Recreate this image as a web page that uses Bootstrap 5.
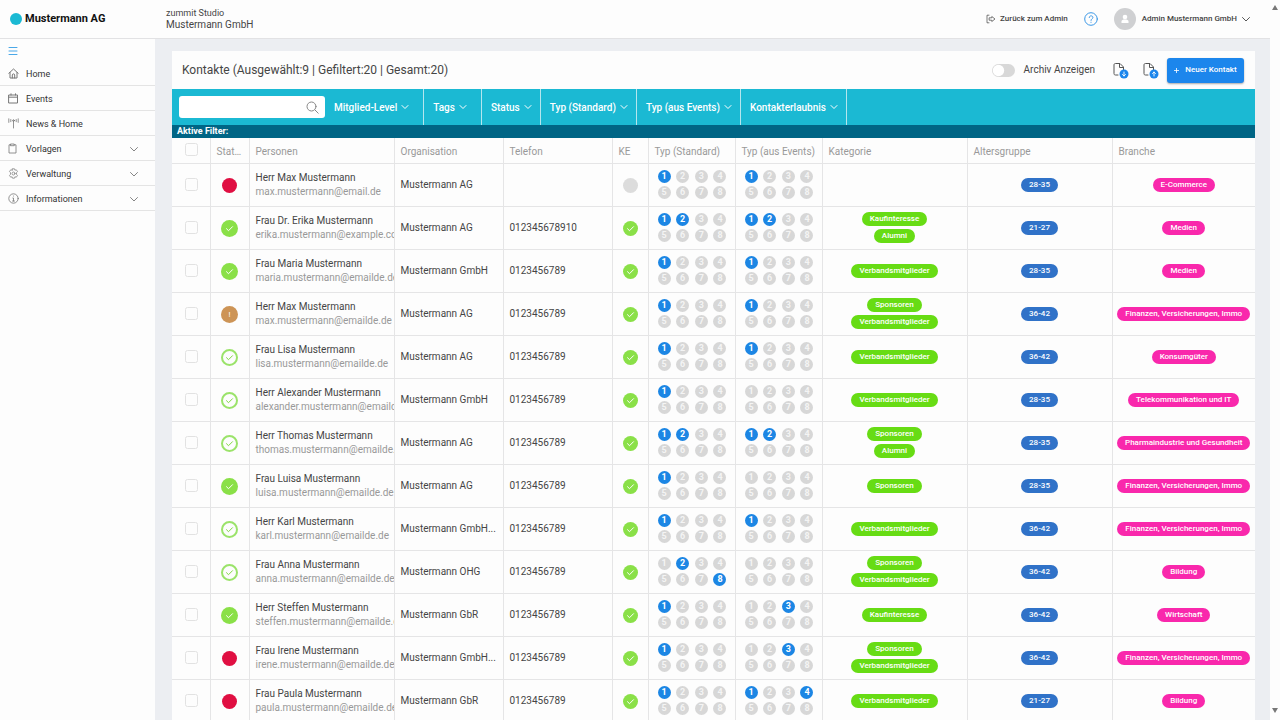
<!DOCTYPE html>
<html lang="de">
<head>
<meta charset="utf-8">
<meta name="viewport" content="width=device-width, initial-scale=1">
<title>Kontakte – zummit Studio</title>
<link href="https://cdn.jsdelivr.net/npm/bootstrap@5.3.0/dist/css/bootstrap.min.css" rel="stylesheet">
<style>
  body { font-family: Roboto, "Liberation Sans", sans-serif; font-size: 10px; line-height: 14px; color: #454545; background: #fdfdfd; }
  button, input { font: inherit; color: inherit; }
  svg { display: block; flex: none; fill: none; stroke: currentColor; stroke-linecap: round; stroke-linejoin: round; }
  a { color: inherit; text-decoration: none; }
  .topbar { height: 39px; border-bottom: 1px solid #e2e2e4; padding-left: 10px; padding-right: 19px; }
  .brand { width: 156px; font-size: 11px; font-weight: 700; color: #111; gap: 3px; }
  .brand-dot { width: 12px; height: 12px; background: #1bb9d3; }
  .tenant { line-height: 12px; }
  .tenant small { font-size: 9px; }
  .top-text { font-size: 8px; font-weight: 500; color: #444; }
  .help { color: #3a97e6; }
  .avatar { width: 22px; height: 22px; margin-right: 6px; background: #cfd0d2; color: #fff; }
  .side { width: 155px; padding-top: 8px; }
  .side .burger { color: #4aa8e8; padding: 0 8px 6px; }
  .side a { height: 25px; padding: 1px 16px 0 8px; gap: 7px; font-size: 9px; color: #333; border-bottom: 1px solid #e4e4e4; }
  .side a svg { color: #777; }
  .canvas { background: #eceef2; padding: 12px 15px 0 17px; }
  .panel { background: #fdfdfd; }
  .panel-head { height: 38px; padding: 0 11px 0 10px; }
  .panel-head h1 { font-size: 12px; line-height: 16px; font-weight: 400; }
  .archive { gap: 9px; }
  .archive .form-check-input { --bs-form-switch-bg: url("data:image/svg+xml,%3csvg xmlns='http://www.w3.org/2000/svg' viewBox='-4 -4 8 8'%3e%3ccircle r='3.500' fill='%23fff'/%3e%3c/svg%3e") !important; background-image: var(--bs-form-switch-bg) !important; width: 23px; height: 13px; background-color: #d8d8d8; border: 0; }
  .panel-head .btn-file { color: #555; }
  .btn-new { width: 77px; height: 25px; background: #1c86ec; color: #fff; font-size: 8px; font-weight: 500; border-radius: 3px; box-shadow: 0 1px 2px #0005; gap: 6px; }
  .btn-new:hover { background: #1273d1; color: #fff; }
  .filters { height: 36px; background: #1bb9d3; padding-left: 7px; }
  .search { width: 146px; height: 22px; background: #fff; border-radius: 3px; color: #888; padding-right: 6px; }
  .search input { border: 0; outline: 0; background: none; padding: 0 6px; min-width: 0; }
  .filters .btn { color: #fff; font-size: 10px; font-weight: 500; border-radius: 0; border: 0; border-right: 1px solid #b5e6ee; padding: 0 8px 0 9px; gap: 4px; }
  .filters .btn.roomy { padding-right: 14px; }
  .active-filters { background: #006585; color: #fff; font-size: 9px; font-weight: 700; line-height: 13px; padding-left: 5px; }
  .contacts { table-layout: fixed; width: 100%; }
  .contacts th, .contacts td { border-bottom: 1px solid #e5e5e6; border-right: 1px solid #e5e5e6; padding: 0 0 0 6px; vertical-align: middle; overflow: hidden; white-space: nowrap; text-overflow: ellipsis; }
  .contacts th { height: 25px; padding-top: 3px; font-weight: 400; color: #999; }
  .contacts .tight { padding-right: 6px; }
  .contacts td { height: 43px; }
  .contacts th:last-child, .contacts td:last-child { border-right: 0; }
  .contacts .mid { padding: 0; text-align: center; }
  .contacts .pick { padding: 0 0 0 1px; text-align: center; }
  .contacts .person { text-overflow: clip; }
  .contacts input { margin: 0; width: 13px; height: 13px; border: 1px solid #e2e2e2; border-radius: 2px; box-shadow: none; background-color: #fdfdfd; }
  .mail { color: #999; }
  .dot { width: 15px; height: 15px; margin: 2px auto 0; }
  .dot-big { width: 17px; height: 17px; }
  .dot-red { background: #e00f42; }
  .dot-green { background: #8ae048; color: #fff; }
  .dot-ring { border: 2px solid #9be36a; color: #7fd840; }
  .dot-warn { background: #cd9456; color: #fff; font-size: 8px; }
  .dot-none { background: #dcdcdc; }
  .nums { display: grid; grid-template-columns: repeat(4, 13px); justify-content: space-between; width: 69px; margin-left: 3px; row-gap: 3px; }
  .nums span { height: 13px; border-radius: 50%; background: #d7d7d7; color: #f4f4f4; font-size: 9px; line-height: 13px; font-weight: 700; text-align: center; }
  .nums .on { background: #1c86e4; color: #fff; }
  .pills { gap: 3px; }
  .pill { height: 14px; line-height: 14px; padding: 0 8px; border-radius: 7px; font-size: 8px; font-weight: 500; color: #fff; }
  .pill-green { background: #67dc14; }
  .pill-blue { background: #3072c8; }
  .pill-pink { background: #f928ac; }
  .gutter { width: 10px; padding: 5px 0 7px; color: #777; }
  .gutter svg { fill: currentColor; stroke: none; }
</style>
</head>
<body>
<div class="vh-100 overflow-hidden d-flex">
  <div class="flex-grow-1 d-flex flex-column overflow-hidden">
    <header class="topbar d-flex align-items-center flex-shrink-0">
      <div class="brand d-flex align-items-center"><span class="brand-dot rounded-circle"></span>Mustermann AG</div>
      <div class="tenant d-flex flex-column"><small>zummit Studio</small><span>Mustermann GmbH</span></div>
      <a href="#" class="top-text d-flex align-items-center gap-1 ms-auto">
        <svg width="10" height="10" viewBox="0 0 10 10"><path d="M3 1.200H1v7.600h2M3.500 3.800h2.300V2.500L9 5 5.800 7.500V6.200H3.500z" stroke-width=".7"/></svg>
        Zurück zum Admin</a>
      <a href="#" class="help ms-3" aria-label="Hilfe">
        <svg width="14" height="14" viewBox="0 0 14 14"><circle cx="7" cy="7" r="6.300"/><path d="M5.200 5.500c0-2.300 3.700-2.200 3.700 0C8.900 6.800 7 6.800 7 8.400M7 10.200v.2"/></svg></a>
      <a href="#" class="top-text d-flex align-items-center ms-3">
        <span class="avatar rounded-circle d-flex align-items-center justify-content-center">
          <svg width="8" height="10" viewBox="0 0 8 10"><g fill="currentColor" stroke="none"><circle cx="4" cy="3" r="2.300"/><path d="M.5 9V7.500C.5 6 2 5.500 4 5.500s3.500.5 3.500 2V9z"/></g></svg></span>
        <span class="me-1">Admin Mustermann GmbH</span>
        <svg width="10" height="10" viewBox="0 0 10 10"><path d="M1.500 3.500 5 7l3.500-3.500" stroke-width=".9"/></svg></a>
    </header>
    <div class="flex-grow-1 d-flex overflow-hidden">
      <nav class="side flex-shrink-0">
        <button class="burger btn border-0 d-block" type="button" aria-label="Menü"><svg width="10" height="8" viewBox="0 0 10 8"><path d="M1 .5h8M1 4h8M1 7.500h8" stroke-width="1"/></svg></button>
        <a href="#" class="d-flex align-items-center"><svg width="11" height="11" viewBox="0 0 11 11"><path d="M.8 5.300 5.500 1l4.700 4.300M2 4.500V10h7V4.500M4.300 10V7c0-1.500 2.400-1.500 2.400 0v3"/></svg>Home</a>
        <a href="#" class="d-flex align-items-center"><svg width="11" height="11" viewBox="0 0 11 11"><path d="M1 2h8.500v8H1zM1 4.200h8.500M3 .8V2M7.500.8V2"/></svg>Events</a>
        <a href="#" class="d-flex align-items-center"><svg width="11" height="11" viewBox="0 0 11 11"><path d="M5.500 3.500V10M2.800 1.500v2.200M8.200 1.500v2.200M.8.800v3.600M10.200.8v3.600" stroke-width=".8"/><circle cx="5.500" cy="2.600" r=".8"/></svg>News &amp; Home</a>
        <a href="#" class="d-flex align-items-center"><svg width="11" height="11" viewBox="0 0 11 11"><path d="M2.800 1.800H1V10h7V1.800H6.200M2.800 1h3.400v1.700H2.800z" stroke-width=".8"/></svg>Vorlagen<svg class="ms-auto" width="10" height="10" viewBox="0 0 10 10"><path d="M1.500 3.500 5 7l3.500-3.500" stroke-width=".9"/></svg></a>
        <a href="#" class="d-flex align-items-center"><svg width="11" height="11" viewBox="0 0 11 11"><path d="m4.500.8h2l.4 1.400 1.400-.4 1.200 1.800-1 1.100v1.600l1 1.100-1.200 1.800-1.400-.4-.4 1.400h-2l-.4-1.400-1.400.4-1.200-1.800 1-1.100V4.700l-1-1.100 1.200-1.800 1.400.4z" stroke-width=".7"/><circle cx="5.500" cy="5.500" r="1.500" stroke-width=".7"/></svg>Verwaltung<svg class="ms-auto" width="10" height="10" viewBox="0 0 10 10"><path d="M1.500 3.500 5 7l3.500-3.500" stroke-width=".9"/></svg></a>
        <a href="#" class="d-flex align-items-center"><svg width="11" height="11" viewBox="0 0 11 11"><circle cx="5.500" cy="5.500" r="4.700" stroke-width=".8"/><path d="M5.500 3v.1M4.800 5h.7v3M4.500 8h2" stroke-width=".8"/></svg>Informationen<svg class="ms-auto" width="10" height="10" viewBox="0 0 10 10"><path d="M1.500 3.500 5 7l3.500-3.500" stroke-width=".9"/></svg></a>
      </nav>
      <main class="canvas flex-grow-1 overflow-hidden">
        <div class="panel">
          <div class="panel-head d-flex align-items-center">
            <h1 class="m-0 me-auto">Kontakte (Ausgewählt:9 | Gefiltert:20 | Gesamt:20)</h1>
            <div class="archive form-switch d-flex align-items-center p-0">
              <input class="form-check-input m-0" type="checkbox" role="switch" id="archiv"><label for="archiv">Archiv Anzeigen</label>
            </div>
            <button class="btn btn-file p-0 border-0 ms-3 me-2" type="button" aria-label="Exportieren"><svg width="18" height="18" viewBox="0 0 18 18"><path d="M7 14H4.500C3.500 14 3 13.500 3 12.500V4c0-1 .5-1.500 1.500-1.500H9L12.500 6v3M8.500 2.500V6.500h4"/><circle cx="13" cy="13" r="4.500" fill="#1c86ec" stroke="none"/><path d="M13 11v4m-1.500-1.500L13 15l1.500-1.500" stroke="#fff" stroke-width=".9"/></svg></button>
            <button class="btn btn-file p-0 border-0 ms-1 me-2" type="button" aria-label="Importieren"><svg width="18" height="18" viewBox="0 0 18 18"><path d="M7 14H4.500C3.500 14 3 13.500 3 12.500V4c0-1 .5-1.500 1.500-1.500H9L12.500 6v3M8.500 2.500V6.500h4"/><circle cx="13" cy="13" r="4.500" fill="#1c86ec" stroke="none"/><path d="M13 15v-4m-1.500 1.500L13 11l1.500 1.500" stroke="#fff" stroke-width=".9"/></svg></button>
            <button class="btn btn-new p-0 d-flex align-items-center justify-content-center" type="button"><svg width="5" height="5" viewBox="0 0 5 5"><path d="M2.500 0v5M0 2.500h5" stroke-width=".8"/></svg>Neuer Kontakt</button>
          </div>
          <div class="filters d-flex align-items-stretch">
            <div class="search d-flex align-items-center align-self-center"><input class="flex-grow-1" type="text" aria-label="Suche"><svg width="13" height="13" viewBox="0 0 13 13"><circle cx="5.500" cy="5.500" r="4.500"/><path d="m9 9 3.200 3.200"/></svg></div>
            <button class="btn roomy d-flex align-items-center" type="button">Mitglied-Level<svg width="8" height="8" viewBox="0 0 8 8"><path d="m1 2.500 3 3 3-3"/></svg></button>
            <button class="btn roomy d-flex align-items-center" type="button">Tags<svg width="8" height="8" viewBox="0 0 8 8"><path d="m1 2.500 3 3 3-3"/></svg></button>
            <button class="btn d-flex align-items-center" type="button">Status<svg width="8" height="8" viewBox="0 0 8 8"><path d="m1 2.500 3 3 3-3"/></svg></button>
            <button class="btn d-flex align-items-center" type="button">Typ (Standard)<svg width="8" height="8" viewBox="0 0 8 8"><path d="m1 2.500 3 3 3-3"/></svg></button>
            <button class="btn d-flex align-items-center" type="button">Typ (aus Events)<svg width="8" height="8" viewBox="0 0 8 8"><path d="m1 2.500 3 3 3-3"/></svg></button>
            <button class="btn d-flex align-items-center" type="button">Kontakterlaubnis<svg width="8" height="8" viewBox="0 0 8 8"><path d="m1 2.500 3 3 3-3"/></svg></button>
          </div>
          <div class="active-filters">Aktive Filter:</div>
          <table class="contacts">
            <colgroup><col width="38"><col width="39"><col width="145"><col width="109"><col width="109"><col width="36"><col width="87"><col width="87"><col width="145"><col width="145"><col></colgroup>
            <thead><tr>
              <th class="pick"><input class="form-check-input" type="checkbox" aria-label="Alle auswählen"></th>
              <th class="tight">Status</th><th>Personen</th><th>Organisation</th><th>Telefon</th><th>KE</th><th>Typ (Standard)</th><th>Typ (aus Events)</th><th>Kategorie</th><th>Altersgruppe</th><th>Branche</th>
            </tr></thead>
            <tbody id="rows"></tbody>
          </table>
        </div>
      </main>
    </div>
  </div>
  <div class="gutter d-flex flex-column justify-content-between align-items-center flex-shrink-0" aria-hidden="true">
    <svg width="6" height="5" viewBox="0 0 6 5"><path d="M3 0 6 5H0z"/></svg>
    <svg width="6" height="5" viewBox="0 0 6 5"><path d="M3 5 6 0H0z"/></svg>
  </div>
</div>
<script src="https://cdn.jsdelivr.net/npm/bootstrap@5.3.0/dist/js/bootstrap.bundle.min.js"></script>
<script>
  const fin = 'Finanzen, Versicherungen, Immo', vm = 'Verbandsmitglieder', tel = '0123456789';
  // status, name, mail, organisation, phone, permission, standard types, event types, categories, age, sector
  const contacts = [
    ['red', 'Herr Max Mustermann', 'max.mustermann@email.de', 'Mustermann AG', '', 0, [1], [1], [], '28-35', 'E-Commerce'],
    ['green', 'Frau Dr. Erika Mustermann', 'erika.mustermann@example.com', 'Mustermann AG', '012345678910', 1, [1, 2], [1, 2], ['Kaufinteresse', 'Alumni'], '21-27', 'Medien'],
    ['green', 'Frau Maria Mustermann', 'maria.mustermann@emailde.de', 'Mustermann GmbH', tel, 1, [1], [1], [vm], '28-35', 'Medien'],
    ['warn', 'Herr Max Mustermann', 'max.mustermann@emailde.de', 'Mustermann AG', tel, 1, [1], [1], ['Sponsoren', vm], '36-42', fin],
    ['ring', 'Frau Lisa Mustermann', 'lisa.mustermann@emailde.de', 'Mustermann AG', tel, 1, [1], [1], [vm], '36-42', 'Konsumgüter'],
    ['ring', 'Herr Alexander Mustermann', 'alexander.mustermann@emailde.de', 'Mustermann GmbH', tel, 1, [1], [], [vm], '28-35', 'Telekommunikation und IT'],
    ['ring', 'Herr Thomas Mustermann', 'thomas.mustermann@emailde.de', 'Mustermann AG', tel, 1, [1, 2], [1, 2], ['Sponsoren', 'Alumni'], '28-35', 'Pharmaindustrie und Gesundheit'],
    ['green', 'Frau Luisa Mustermann', 'luisa.mustermann@emailde.de', 'Mustermann AG', tel, 1, [1], [], ['Sponsoren'], '28-35', fin],
    ['ring', 'Herr Karl Mustermann', 'karl.mustermann@emailde.de', 'Mustermann GmbH...', tel, 1, [1], [1], [vm], '36-42', fin],
    ['ring', 'Frau Anna Mustermann', 'anna.mustermann@emailde.de', 'Mustermann OHG', tel, 1, [2, 8], [], ['Sponsoren', vm], '36-42', 'Bildung'],
    ['green', 'Herr Steffen Mustermann', 'steffen.mustermann@emailde.de', 'Mustermann GbR', tel, 1, [1], [3], ['Kaufinteresse'], '36-42', 'Wirtschaft'],
    ['red', 'Frau Irene Mustermann', 'irene.mustermann@emailde.de', 'Mustermann GmbH...', tel, 1, [1], [3], ['Sponsoren', vm], '36-42', fin],
    ['red', 'Frau Paula Mustermann', 'paula.mustermann@emailde.de', 'Mustermann GbR', tel, 1, [1], [1, 4], [vm], '21-27', 'Bildung']
  ];
  const check = '<svg width="9" height="9" viewBox="0 0 9 9"><path d="m1.500 4.700 2 2 4-4"/></svg>';
  const dot = (kind, big) => `<div class="dot ${big ? 'dot-big' : ''} dot-${kind} rounded-circle d-flex align-items-center justify-content-center">${kind === 'green' || kind === 'ring' ? check : kind === 'warn' ? '!' : ''}</div>`;
  const nums = on => `<div class="nums">${[1, 2, 3, 4, 5, 6, 7, 8].map(n => `<span${on.includes(n) ? ' class="on"' : ''}>${n}</span>`).join('')}</div>`;
  const pills = (list, tone) => `<div class="d-flex flex-column align-items-center pills">${list.map(t => `<span class="pill pill-${tone}">${t}</span>`).join('')}</div>`;
  document.getElementById('rows').innerHTML = contacts.map(([st, name, mail, org, phone, ke, std, ev, cat, age, sector]) => `<tr>
    <td class="pick"><input class="form-check-input" type="checkbox" aria-label="${name} auswählen"></td>
    <td class="mid">${dot(st, st !== 'red')}</td>
    <td class="person">${name}<br><span class="mail">${mail}</span></td>
    <td>${org}</td><td>${phone}</td>
    <td class="mid">${dot(ke ? 'green' : 'none', false)}</td>
    <td>${nums(std)}</td><td>${nums(ev)}</td>
    <td class="mid">${pills(cat, 'green')}</td><td class="mid">${pills([age], 'blue')}</td><td class="mid">${pills([sector], 'pink')}</td>
  </tr>`).join('');
</script>
</body>
</html>
